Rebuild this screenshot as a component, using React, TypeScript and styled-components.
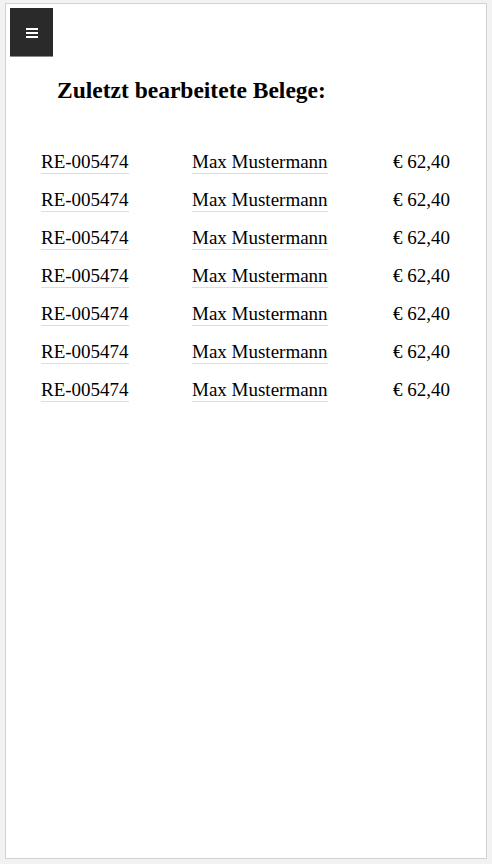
import React from 'react'
import styled, { createGlobalStyle } from 'styled-components'

const GlobalStyle = createGlobalStyle`
  html, body {
    margin: 0;
    padding: 0;
    background: #f2f2f2;
    font-family: "Liberation Serif", "Times New Roman", serif;
    color: #000;
  }
`

const Page = styled.div`
  box-sizing: border-box;
  margin: 3px 5px 0 5px;
  height: 856px;
  background: #fff;
  border: 1px solid #d2d2d2;
  padding: 4px;
`

const MenuButton = styled.button`
  display: flex;
  align-items: center;
  justify-content: center;
  width: 43px;
  height: 49px;
  padding: 0;
  border: none;
  border-bottom: 1px solid #8a8a8a;
  background: #2a2a2a;
  cursor: pointer;
`

const Title = styled.h2`
  margin: 19px 0 0 47px;
  font-size: 23.5px;
  font-weight: bold;
  line-height: 28px;
`

const List = styled.div`
  display: flex;
  flex-direction: column;
  gap: 12px;
  margin: 47px 32px 0 31px;
`

const Row = styled.div`
  display: grid;
  grid-template-columns: 151px 1fr auto;
  align-items: start;
  height: 26px;
`

const Cell = styled.span<{ $link?: boolean }>`
  justify-self: start;
  font-size: 19px;
  line-height: 22px;
  border-bottom: 1px solid ${(p) => (p.$link ? '#dfe7ab' : 'transparent')};
  padding-bottom: 0;
`

const Amount = styled(Cell)`
  justify-self: end;
`

const rows = Array.from({ length: 7 }, () => ({
  nr: 'RE-005474',
  name: 'Max Mustermann',
  amount: '€ 62,40',
}))

function Hamburger() {
  return (
    <svg width="12" height="11" viewBox="0 0 12 11">
      <rect x="0" y="1" width="12" height="2" fill="#fff" />
      <rect x="0" y="5" width="12" height="2" fill="#fff" />
      <rect x="0" y="9" width="12" height="2" fill="#fff" />
    </svg>
  )
}

export default function App() {
  return (
    <>
      <GlobalStyle />
      <Page>
        <MenuButton aria-label="Menü">
          <Hamburger />
        </MenuButton>
        <Title>Zuletzt bearbeitete Belege:</Title>
        <List>
          {rows.map((r, i) => (
            <Row key={i}>
              <Cell $link>{r.nr}</Cell>
              <Cell $link>{r.name}</Cell>
              <Amount>{r.amount}</Amount>
            </Row>
          ))}
        </List>
      </Page>
    </>
  )
}
